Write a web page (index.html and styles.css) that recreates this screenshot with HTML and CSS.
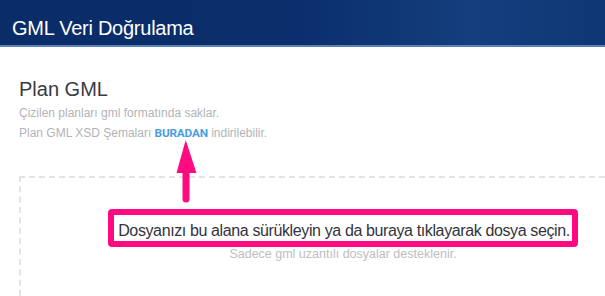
FILE: index.html
```html
<!DOCTYPE html>
<html lang="tr">
<head>
<meta charset="utf-8">
<title>GML Veri Doğrulama</title>
<link rel="stylesheet" href="styles.css">
</head>
<body>
<header class="topbar">
  <h1 class="topbar-title">GML Veri Doğrulama</h1>
</header>
<main class="content">
  <h2 class="section-title">Plan GML</h2>
  <p class="desc">Çizilen planları gml formatında saklar.</p>
  <p class="desc">Plan GML XSD Şemaları <a class="link" href="#">BURADAN</a> indirilebilir.</p>
  <div class="dropzone">
    <div class="drop-msg">Dosyanızı bu alana sürükleyin ya da buraya tıklayarak dosya seçin.</div>
    <div class="drop-hint">Sadece gml uzantılı dosyalar desteklenir.</div>
  </div>
</main>
<svg class="arrow" width="36" height="70" viewBox="0 0 36 70">
  <polygon points="15.7,2 6.5,35 26.5,35" fill="#ff0a80"/>
  <line x1="16" y1="33" x2="16" y2="61" stroke="#ff0a80" stroke-width="7" stroke-linecap="round"/>
</svg>
</body>
</html>
```
FILE: styles.css
```css
html, body {
  margin: 0;
  padding: 0;
}
body {
  width: 605px;
  height: 296px;
  overflow: hidden;
  background: #ffffff;
  font-family: "Liberation Sans", Arial, sans-serif;
  position: relative;
}
.topbar {
  height: 28px;
  padding: 17px 0 0 12px;
  background: linear-gradient(90deg, #0a2c68 0%, #0b2f6c 50%, #143e7d 78%, #0f3776 100%);
  border-bottom: 2px solid #5a82b8;
}
.topbar-title {
  margin: 0;
  font-size: 20px;
  letter-spacing: -0.25px;
  line-height: 22px;
  font-weight: normal;
  color: #ffffff;
}
.content {
  padding: 30px 0 0 19px;
}
.section-title {
  margin: 0 0 2px 0;
  font-size: 20px;
  line-height: 24px;
  font-weight: normal;
  color: #3a3a44;
}
.desc {
  margin: 0;
  font-size: 12px;
  line-height: 20px;
  color: #b3b3b8;
}
.link {
  font-family: Roboto, "Liberation Sans", sans-serif;
  font-weight: bold;
  font-size: 11.8px;
  letter-spacing: -0.2px;
  color: #4a9ee0;
  text-decoration: none;
}
.dropzone {
  margin-top: 33px;
  height: 87px;
  border: 2px dashed #e4e4e4;
  border-right: none;
  border-bottom: none;
  padding: 31px 0 0 60px;
  display: flex;
  flex-direction: column;
  align-items: center;
}
.drop-msg {
  border: 6px solid #ff0a80;
  border-radius: 4px;
  padding: 6px 2px 0 4px;
  height: 20px;
  font-size: 16px;
  letter-spacing: -0.38px;
  line-height: 20px;
  color: #33333d;
  white-space: nowrap;
}
.drop-hint {
  font-size: 12.5px;
  line-height: 14px;
  color: #bdbdc2;
}
.arrow {
  position: absolute;
  left: 170px;
  top: 138px;
}
```
